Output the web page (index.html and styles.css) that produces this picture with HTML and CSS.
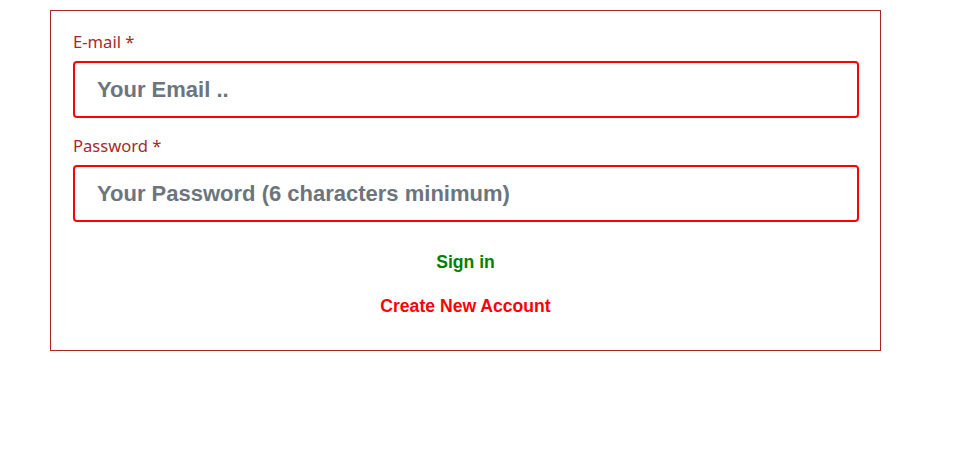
FILE: index.html
```html
<!DOCTYPE html>
<html>
<head>
<meta charset="utf-8">
<link rel="stylesheet" href="styles.css">
</head>
<body>
<form class="card">
  <div class="field">
    <label class="label">E-mail *</label>
    <input class="input" type="email" placeholder="Your Email ..">
  </div>
  <div class="field">
    <label class="label">Password *</label>
    <input class="input" type="password" placeholder="Your Password (6 characters minimum)">
  </div>
  <div class="actions">
    <a class="link signin">Sign in</a>
    <a class="link create">Create New Account</a>
  </div>
</form>
</body>
</html>
```
FILE: styles.css
```css
html, body {
  margin: 0;
  padding: 0;
  background: #fff;
}
body {
  padding: 10px 0 0 50px;
}
.card {
  box-sizing: border-box;
  width: 831px;
  height: 341px;
  border: 1px solid #b22222;
  padding: 20px 22px 0 22px;
  display: flex;
  flex-direction: column;
}
.field {
  display: flex;
  flex-direction: column;
  margin-bottom: 17px;
}
.label {
  font-family: "Noto Sans", sans-serif;
  font-size: 16.6px;
  line-height: 22px;
  color: #a52a2a;
  margin-bottom: 8px;
}
.input {
  box-sizing: border-box;
  width: 786px;
  height: 57px;
  border: 2px solid #ff0000;
  border-radius: 4px;
  padding: 0 22px;
  font-family: "Liberation Sans", Arial, sans-serif;
  font-weight: bold;
  font-size: 22px;
  outline: none;
}
.input::placeholder {
  color: #6c757d;
  opacity: 1;
}
.actions {
  display: flex;
  flex-direction: column;
  align-items: center;
  gap: 22px;
  margin-top: 13px;
}
.link {
  font-family: "Liberation Sans", Arial, sans-serif;
  font-weight: bold;
  font-size: 17.6px;
  line-height: 21px;
  cursor: pointer;
}
.signin { color: #008000; }
.create { color: #ff0000; margin-top: 1px; }
```
